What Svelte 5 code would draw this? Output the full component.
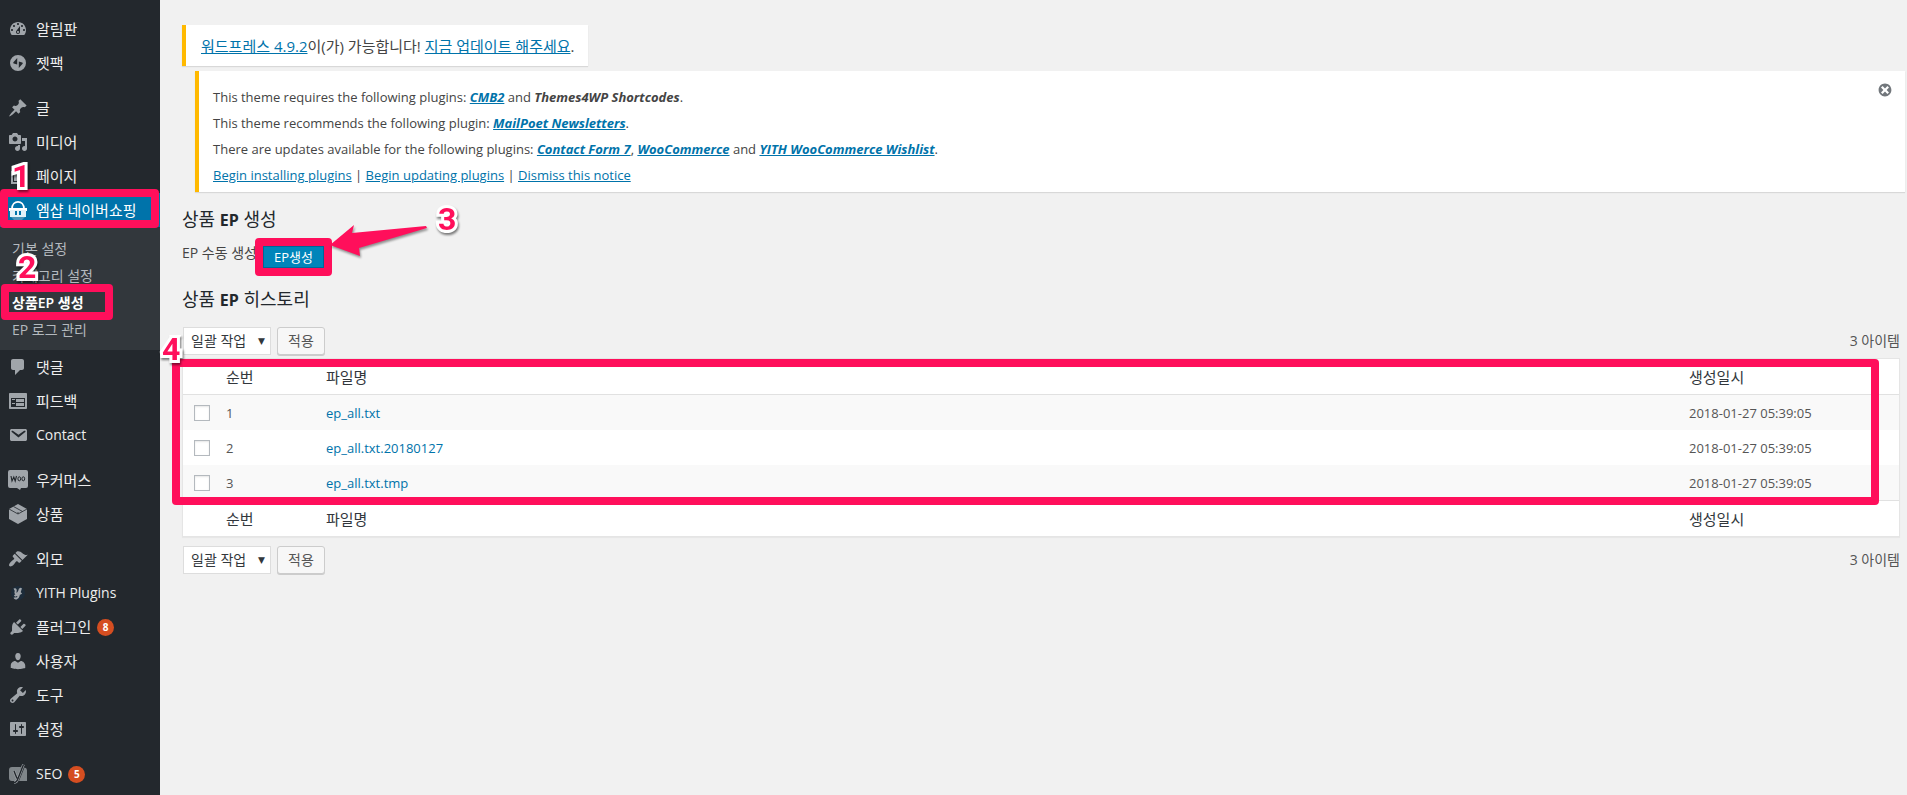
<script lang="ts">
  type MenuItem = { label: string; icon: string; badge?: number; gap?: boolean; current?: boolean; latin?: boolean };

  const menu: MenuItem[] = [
    { label: '알림판', icon: 'dashboard' },
    { label: '젯팩', icon: 'jetpack' },
    { label: '글', icon: 'post', gap: true },
    { label: '미디어', icon: 'media' },
    { label: '페이지', icon: 'page' },
    { label: '엠샵 네이버쇼핑', icon: 'shop', current: true },
    { label: '댓글', icon: 'comments' },
    { label: '피드백', icon: 'feedback' },
    { label: 'Contact', icon: 'email', latin: true },
    { label: '우커머스', icon: 'woo', gap: true },
    { label: '상품', icon: 'product' },
    { label: '외모', icon: 'appearance', gap: true },
    { label: 'YITH Plugins', icon: 'yith', latin: true },
    { label: '플러그인', icon: 'plugins', badge: 8 },
    { label: '사용자', icon: 'users' },
    { label: '도구', icon: 'tools' },
    { label: '설정', icon: 'settings' },
    { label: 'SEO', icon: 'seo', badge: 5, gap: true, latin: true }
  ];

  const submenu = ['기본 설정', '카테고리 설정', '상품EP 생성', 'EP 로그 관리'];
  const activeSub = '상품EP 생성';

  const files = [
    { no: 1, name: 'ep_all.txt', date: '2018-01-27 05:39:05' },
    { no: 2, name: 'ep_all.txt.20180127', date: '2018-01-27 05:39:05' },
    { no: 3, name: 'ep_all.txt.tmp', date: '2018-01-27 05:39:05' }
  ];

  const paths: Record<string, string> = {
    dashboard: 'M3.76 16h12.48c1.1-1.37 1.76-3.11 1.76-5 0-4.42-3.58-8-8-8s-8 3.58-8 8c0 1.89.66 3.63 1.76 5zM10 4c.55 0 1 .45 1 1s-.45 1-1 1-1-.45-1-1 .45-1 1-1zM6 6c.55 0 1 .45 1 1s-.45 1-1 1-1-.45-1-1 .45-1 1-1zm8 0c.55 0 1 .45 1 1s-.45 1-1 1-1-.45-1-1 .45-1 1-1zm-5.37 5.55L12 7v6c0 1.1-.9 2-2 2s-2-.9-2-2c0-.57.24-1.08.63-1.45zM4 10c.55 0 1 .45 1 1s-.45 1-1 1-1-.45-1-1 .45-1 1-1zm12 0c.55 0 1 .45 1 1s-.45 1-1 1-1-.45-1-1 .45-1 1-1zm-5 3c0-.55-.45-1-1-1s-1 .45-1 1 .45 1 1 1 1-.45 1-1z',
    jetpack: 'M10 2a8 8 0 1 0 0 16 8 8 0 0 0 0-16zM9.2 5v6.4l-3.4-.9c-.6-.2-.7-.8-.4-1.300zM10.800 15V8.600l3.400.9c.6.2.7.8.4 1.300z',
    post: 'M10.44 3.02l1.82-1.82 6.36 6.35-1.83 1.82c-1.05-.68-2.48-.57-3.41.36l-.75.75c-.92.93-1.04 2.35-.35 3.41l-1.83 1.82-2.41-2.41-2.8 2.79c-.42.42-3.38 2.71-3.8 2.29s1.86-3.39 2.28-3.81l2.79-2.79L4.1 9.36l1.83-1.82c1.05.69 2.48.57 3.4-.36l.75-.75c.93-.92 1.05-2.35.36-3.41z',
    media: 'M13 11V4c0-.55-.45-1-1-1h-1.67L9 1H5L3.67 3H2c-.55 0-1 .45-1 1v7c0 .55.45 1 1 1h10c.55 0 1-.45 1-1zM7 4.5c1.38 0 2.5 1.12 2.5 2.5S8.38 9.5 7 9.5 4.5 8.38 4.5 7 5.62 4.5 7 4.5zM14 6h5v10.5c0 1.38-1.12 2.5-2.5 2.5S14 17.88 14 16.5s1.12-2.5 2.5-2.5c.17 0 .34.02.5.05V9h-3V6zm-4 8.05V13h2v3.5c0 1.38-1.12 2.5-2.5 2.5S7 17.88 7 16.5 8.12 14 9.5 14c.17 0 .34.02.5.05z',
    page: 'M6 15V2h10v13H6zm-1 1h8v2H3V5h2v11z',
    comments: 'M5 2h9c1.1 0 2 .9 2 2v7c0 1.1-.9 2-2 2h-2l-5 5v-5H5c-1.1 0-2-.9-2-2V4c0-1.1.9-2 2-2z',
    feedback: 'M2 2h16c.55 0 1 .45 1 1v14c0 .55-.45 1-1 1H2c-.55 0-1-.45-1-1V3c0-.55.45-1 1-1zm15 14V7H3v9h14zM4 8v1h3V8H4zm4 0v3h8V8H8zm-4 4v1h3v-1H4zm4 0v3h8v-3H8z',
    email: 'M3.87 4h13.25C18.37 4 19 4.59 19 5.79v8.42c0 1.19-.63 1.79-1.88 1.79H3.87c-1.25 0-1.88-.6-1.88-1.79V5.79c0-1.2.63-1.79 1.88-1.79zm6.62 8.6l6.74-5.53c.24-.2.43-.66.13-1.07-.29-.41-.82-.42-1.17-.17l-5.7 3.86L4.8 5.83c-.35-.25-.88-.24-1.17.17-.3.41-.11.87.13 1.07z',
    appearance: 'M14.48 11.06L7.41 3.99l1.5-1.5c.5-.56 2.3-.47 3.51.32 1.21.8 1.43 1.28 2.91 2.1 1.18.64 2.45 1.26 4.45.85zm-.71.71L6.7 4.7 4.93 6.47c-.39.39-.39 1.02 0 1.41l1.06 1.06c.39.39.39 1.03 0 1.42-.6.6-1.43 1.11-2.21 1.69-.35.26-.7.53-1.01.84C1.43 14.23.4 16.08 1.4 17.07c.99 1 2.84-.03 4.18-1.36.31-.31.58-.66.85-1.02.57-.78 1.08-1.61 1.69-2.21.39-.39 1.02-.39 1.41 0l1.06 1.06c.39.39 1.02.39 1.41 0z',
    plugins: 'M13.11 4.36L9.87 7.6 8 5.73l3.24-3.24c.35-.34 1.05-.2 1.56.32.52.51.66 1.21.31 1.55zm-8 1.77l.91-1.12 9.01 9.01-1.19.84c-.71.71-2.63 1.16-3.82 1.16H6.14L4.9 17.26c-.59.59-1.54.59-2.12 0-.59-.58-.59-1.53 0-2.12l1.24-1.24v-3.88c0-1.13.4-3.19 1.09-3.89zm7.26 3.97l3.24-3.24c.34-.35 1.04-.21 1.55.31.52.51.66 1.21.31 1.55l-3.24 3.25z',
    users: 'M10 9.25c-2.27 0-2.73-3.44-2.73-3.44C7 4.02 7.82 2 9.97 2c2.16 0 2.98 2.02 2.71 3.81 0 0-.41 3.44-2.68 3.44zm0 2.57L12.72 10c2.39 0 4.52 2.33 4.52 4.53v2.49s-3.65 1.13-7.24 1.13c-3.65 0-7.24-1.13-7.24-1.13v-2.49c0-2.25 1.94-4.48 4.47-4.48z',
    tools: 'M16.68 9.77c-1.34 1.34-3.3 1.67-4.95.99l-5.41 6.52c-.99.99-2.59.99-3.58 0s-.99-2.59 0-3.57l6.52-5.42c-.68-1.65-.35-3.61.99-4.95 1.28-1.28 3.12-1.62 4.72-1.06l-2.89 2.89 2.82 2.82 2.86-2.87c.53 1.58.18 3.39-1.08 4.65zM3.81 16.21c.4.39 1.04.39 1.43 0 .4-.4.4-1.04 0-1.43-.39-.4-1.03-.4-1.43 0-.39.39-.39 1.03 0 1.43z',
    settings: 'M18 16V4c0-.55-.45-1-1-1H3c-.55 0-1 .45-1 1v12c0 .55.45 1 1 1h14c.55 0 1-.45 1-1zM8 11h1c.55 0 1 .45 1 1s-.45 1-1 1H8v1.5c0 .28-.22.5-.5.5s-.5-.22-.5-.5V13H6c-.55 0-1-.45-1-1s.45-1 1-1h1V5.5c0-.28.22-.5.5-.5s.5.22.5.5V11zm5-2h-1c-.55 0-1-.45-1-1s.45-1 1-1h1V5.5c0-.28.22-.5.5-.5s.5.22.5.5V7h1c.55 0 1 .45 1 1s-.45 1-1 1h-1v5.5c0 .28-.22.5-.5.5s-.5-.22-.5-.5V9z'
  };

  let bulk = $state({ top: '-1', bottom: '-1' });
</script>

<svelte:head>
  <title>상품 EP 생성</title>
</svelte:head>

{#snippet icon(name: string)}
  <svg class="icon" viewBox="0 0 20 20" aria-hidden="true">
    {#if name === 'shop'}
      <path d="M4 9C4-.5 16-.5 16 9" fill="none" stroke="#fff" stroke-width="1.800" />
      <path d="M1 8h18v3H1z" fill="#fff" />
      <path d="M2 10h16v7H2z" fill="#e4f1f8" />
      <path d="M7 11h2v4H7zM11 11h2v4h-2z" fill="#0073aa" />
      <path d="M3 17h14l-3 3H6z" fill="#4a93b8" />
    {:else if name === 'woo'}
      <path d="M2 0h16a2 2 0 0 1 2 2v14a2 2 0 0 1-2 2h-5l-1 2-3-2H2a2 2 0 0 1-2-2V2a2 2 0 0 1 2-2z" />
      <path d="M3 6l1 5 1.800-4 1.400 4L8.500 6" fill="none" stroke="#23282d" stroke-width="1.100" />
      <ellipse cx="11.300" cy="8.800" rx="1.400" ry="2" fill="none" stroke="#23282d" />
      <ellipse cx="15.300" cy="8.800" rx="1.400" ry="2" fill="none" stroke="#23282d" />
    {:else if name === 'product'}
      <path d="M10 0l9 5v10l-9 5-9-5V5z" />
      <path d="M1 5l9 5 9-5M5.500 2.500l9 5M10 10V8" fill="none" stroke="#23282d" stroke-width=".8" />
    {:else if name === 'yith'}
      <circle cx="10" cy="10" r="7" fill="#1d2c3a" />
      <path d="M6 6.500c2-1 2 1 1.500 2.500-.6 2 2 2.500 3.500-.5l1-3M13 5l-2.500 8c-.7 3-3.500 3-4 1.500M6.500 13c2-1.500 5-1.500 7-3" fill="none" stroke="#a0a5aa" stroke-width="2" />
    {:else if name === 'seo'}
      <path d="M4 3h9l-4 14H4a3 3 0 0 1-3-3V6a3 3 0 0 1 3-3zM16.500 3.400A3 3 0 0 1 19 6v11h-8z" opacity=".75" />
      <path d="M6 7l3 7.500M15.500.5L10 14.500c-.8 2.500-2 4-4 4" fill="none" stroke="#a0a5aa" stroke-width="2.600" />
      <path d="M6 7l3 7.500M15.500.5L10 14.500c-.8 2.500-2 4-4 4" fill="none" stroke="#23282d" stroke-width="1.400" />
    {:else}
      <path d={paths[name]} />
    {/if}
  </svg>
{/snippet}

{#snippet tablenav(pos: 'top' | 'bottom')}
  <div class="tablenav">
    <div class="bulk">
      <span class="select-wrap">
        <select aria-label="일괄 작업 선택" bind:value={bulk[pos]}>
          <option value="-1">일괄 작업</option>
          <option value="delete">삭제</option>
        </select>
      </span>
      <button class="button" type="button">적용</button>
    </div>
    <span class="count">{files.length} 아이템</span>
  </div>
{/snippet}

<div class="admin">
  <nav class="sidebar">
    <ul class="menu">
      {#each menu as item}
        <li class:gap={item.gap} class:current={item.current}>
          <a class="menu-link" class:latin={item.latin} href="#{item.icon}">
            {@render icon(item.icon)}
            <span>{item.label}</span>
            {#if item.badge}<span class="badge">{item.badge}</span>{/if}
          </a>
          {#if item.current}
            <span class="mark mark-menu"></span>
            <span class="step step-1">1</span>
            <ul class="submenu">
              {#each submenu as sub}
                <li><a class:active={sub === activeSub} href="#{sub}">{sub}</a></li>
              {/each}
              <li>
                <span class="mark mark-sub"></span>
                <span class="step step-2">2</span>
              </li>
            </ul>
          {/if}
        </li>
      {/each}
    </ul>
  </nav>

  <main class="content">
    <div class="notice update">
      <a href="#version">워드프레스 4.9.2</a>이(가) 가능합니다! <a href="#update">지금 업데이트 해주세요</a>.
    </div>

    <div class="notice plugins">
      <p>This theme requires the following plugins: <a class="name" href="#cmb2">CMB2</a> and <em class="name">Themes4WP Shortcodes</em>.</p>
      <p>This theme recommends the following plugin: <a class="name" href="#mailpoet">MailPoet Newsletters</a>.</p>
      <p>There are updates available for the following plugins: <a class="name" href="#cf7">Contact Form 7</a>, <a class="name" href="#woocommerce">WooCommerce</a> and <a class="name" href="#wishlist">YITH WooCommerce Wishlist</a>.</p>
      <p><a href="#install">Begin installing plugins</a> | <a href="#updating">Begin updating plugins</a> | <a href="#dismiss">Dismiss this notice</a></p>
      <button class="dismiss" type="button" aria-label="Dismiss this notice">
        <svg viewBox="0 0 20 20" aria-hidden="true"><path d="M10 2c4.42 0 8 3.58 8 8s-3.58 8-8 8-8-3.58-8-8 3.58-8 8-8zm5 11l-3-3 3-3-2-2-3 3-3-3-2 2 3 3-3 3 2 2 3-3 3 3z" /></svg>
      </button>
    </div>

    <h2>상품 <b>EP</b> 생성</h2>
    <div class="generate">
      <span>EP 수동 생성</span>
      <div class="generate-action">
        <button class="primary" type="button">EP생성</button>
        <span class="mark mark-button"></span>
        <svg class="arrow" viewBox="0 0 98 36" aria-hidden="true">
          <path d="M0 21L24 1l-2 8 74-7 1 2-68 20 1 8z" />
        </svg>
        <span class="step step-3">3</span>
      </div>
    </div>

    <h2>상품 <b>EP</b> 히스토리</h2>
    {@render tablenav('top')}
    <div class="table-wrap">
      <table>
        <thead>
          <tr><td class="check"></td><th class="no">순번</th><th>파일명</th><th class="date">생성일시</th></tr>
        </thead>
        <tbody>
          {#each files as file}
            <tr>
              <td class="check"><input type="checkbox" aria-label={file.name} /></td>
              <td>{file.no}</td>
              <td><a href="#{file.name}">{file.name}</a></td>
              <td>{file.date}</td>
            </tr>
          {/each}
        </tbody>
        <tfoot>
          <tr><td class="check"></td><th>순번</th><th>파일명</th><th>생성일시</th></tr>
        </tfoot>
      </table>
      <span class="mark mark-table"></span>
      <span class="step step-4">4</span>
    </div>
    {@render tablenav('bottom')}
  </main>
</div>

<style>
  :global(body) {
    margin: 0;
    background: #f1f1f1;
  }

  .admin {
    display: flex;
    min-height: 100vh;
    font-family: 'Open Sans', 'Noto Sans CJK KR', sans-serif;
    font-size: 13px;
    line-height: 20px;
    color: #444;
  }

  ul { list-style: none; margin: 0; padding: 0; }
  a { color: #0073aa; }

  .sidebar {
    flex: 0 0 160px;
    background: #23282d;
  }

  .menu { padding: 12px 0 4px; }
  .menu > li { position: relative; }
  .gap { margin-top: 11px; }

  .menu-link {
    display: flex;
    align-items: center;
    gap: 8px;
    height: 34px;
    padding-left: 8px;
    font-size: 15px;
    color: #eee;
    text-decoration: none;
    white-space: nowrap;
  }

  .menu-link.latin { font-size: 14px; }
  .current .menu-link { background: #0073aa; color: #fff; }
  .icon { flex: none; width: 20px; height: 20px; fill: #a0a5aa; }

  .badge {
    width: 17px;
    height: 17px;
    margin-left: -2px;
    border-radius: 50%;
    background: #d54e21;
    color: #fff;
    font-size: 10px;
    font-weight: 700;
    line-height: 17px;
    text-align: center;
  }

  .submenu {
    position: relative;
    padding: 8px 0 7px;
    background: #32373c;
  }

  .submenu a {
    display: block;
    padding-left: 12px;
    font-size: 14px;
    line-height: 27px;
    color: #b4b9be;
    text-decoration: none;
  }

  .submenu a.active { color: #fff; font-weight: 600; }

  .content {
    flex: 1;
    min-width: 0;
    padding: 25px 7px 25px 22px;
  }

  .notice {
    background: #fff;
    border-left: 4px solid #ffb900;
    box-shadow: 0 1px 1px rgba(0, 0, 0, 0.1);
  }

  .update {
    width: fit-content;
    padding: 11px 14px 10px 15px;
    font-size: 15px;
  }

  .plugins {
    position: relative;
    margin: 5px -5px 0 13px;
    padding: 16px 14px 1px;
  }

  .plugins p { margin: 0 0 6px; }
  .name { font-weight: 700; font-style: italic; }

  .dismiss {
    position: absolute;
    top: 11px;
    right: 12px;
    width: 16px;
    height: 16px;
    padding: 0;
    border: none;
    background: none;
  }

  .dismiss svg { display: block; fill: #72777c; }

  h2 {
    margin: 15px 0 0;
    font-size: 18px;
    font-weight: 400;
    line-height: 24px;
    color: #23282d;
  }

  h2 b { font-size: 16px; font-weight: 700; }

  .generate {
    display: flex;
    align-items: flex-start;
    gap: 6px;
    padding: 11px 0 4px;
    font-size: 14px;
  }

  .generate-action {
    position: relative;
    margin-top: 3px;
  }

  .primary {
    display: block;
    height: 22px;
    padding: 0 10px;
    border: 1px solid #006799;
    background: #0085ba;
    color: #fff;
    font: inherit;
    font-size: 13px;
    line-height: 20px;
  }

  .tablenav {
    display: flex;
    align-items: center;
    justify-content: space-between;
    padding: 9px 0 3px 1px;
  }

  h2 + .tablenav { padding-top: 15px; }
  .bulk { display: flex; gap: 6px; }
  .select-wrap { position: relative; }

  .select-wrap::after {
    content: '▼';
    position: absolute;
    right: 6px;
    top: 4px;
    font-family: 'DejaVu Sans', sans-serif;
    font-size: 9px;
    color: #32373c;
    pointer-events: none;
  }

  select {
    appearance: none;
    box-sizing: border-box;
    height: 28px;
    padding: 0 23px 0 7px;
    border: 1px solid #ddd;
    border-radius: 0;
    background: #fff;
    color: #32373c;
    font: inherit;
    font-size: 14px;
  }

  .button {
    height: 28px;
    padding: 0 10px;
    border: 1px solid #ccc;
    border-radius: 3px;
    background: #f7f7f7;
    box-shadow: 0 1px 0 #ccc;
    color: #555;
    font: inherit;
    font-size: 14px;
  }

  .count { font-size: 14px; color: #555; }
  .table-wrap { position: relative; }

  table {
    width: 100%;
    table-layout: fixed;
    border: 1px solid #e5e5e5;
    border-spacing: 0;
    background: #fff;
    box-shadow: 0 1px 1px rgba(0, 0, 0, 0.04);
  }

  th, td { height: 35px; padding: 0; text-align: left; color: #555; }
  th { font-size: 15px; font-weight: 400; color: #32373c; }
  thead th, thead td { border-bottom: 1px solid #e1e1e1; }
  tfoot th, tfoot td { border-top: 1px solid #e1e1e1; }
  tbody tr:nth-child(odd) { background: #f9f9f9; }
  td a { text-decoration: none; }
  .check { width: 43px; line-height: 0; }
  .no { width: 100px; }
  .date { width: 210px; }

  input[type='checkbox'] {
    appearance: none;
    width: 16px;
    height: 16px;
    margin: 0 0 0 11px;
    border: 1px solid #b4b9be;
    background: #fff;
    box-shadow: inset 0 1px 2px rgba(0, 0, 0, 0.1);
  }

  /* highlight frames and numbered steps */
  .mark {
    position: absolute;
    box-sizing: border-box;
    border: 8px solid #ff0f5b;
    border-radius: 4px;
    pointer-events: none;
  }

  .mark-menu { top: -4px; left: 0; right: 1px; height: 39px; z-index: 1; }
  .mark-sub { top: 57px; left: 1px; width: 112px; height: 36px; }
  .mark-button { inset: -8px; }
  .mark-table { top: 1px; right: 21px; bottom: 32px; left: -10px; }

  .step {
    position: absolute;
    z-index: 2;
    font: bold 32px/32px Roboto, 'Liberation Sans', sans-serif;
    color: #ff0f5b;
    -webkit-text-stroke: 6px #fff;
    paint-order: stroke fill;
    filter: drop-shadow(1px 2px 1px rgba(0, 0, 0, 0.5));
    pointer-events: none;
  }

  .step-1 { top: -33px; left: 12px; }
  .step-2 { top: 24px; left: 18px; }
  .step-3 { top: -43px; left: 175px; }
  .step-4 { top: -25px; left: -20px; }

  .arrow {
    position: absolute;
    top: -22px;
    left: 67px;
    width: 98px;
    height: 36px;
    fill: #ff0f5b;
    filter: drop-shadow(1px 2px 1px rgba(0, 0, 0, 0.4));
  }
</style>
